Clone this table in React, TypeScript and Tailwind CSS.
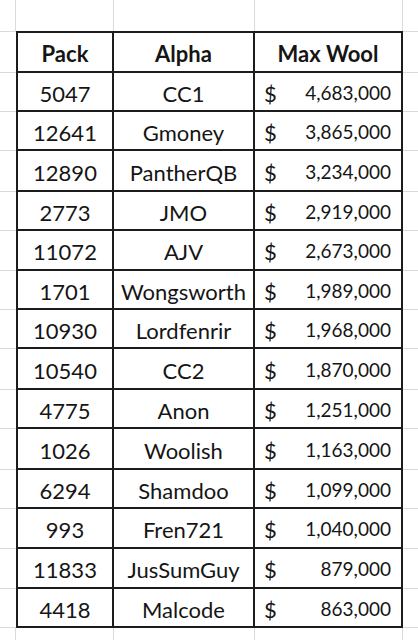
import React from "react";

const rows: [string, string, string][] = [
  ["5047", "CC1", "4,683,000"],
  ["12641", "Gmoney", "3,865,000"],
  ["12890", "PantherQB", "3,234,000"],
  ["2773", "JMO", "2,919,000"],
  ["11072", "AJV", "2,673,000"],
  ["1701", "Wongsworth", "1,989,000"],
  ["10930", "Lordfenrir", "1,968,000"],
  ["10540", "CC2", "1,870,000"],
  ["4775", "Anon", "1,251,000"],
  ["1026", "Woolish", "1,163,000"],
  ["6294", "Shamdoo", "1,099,000"],
  ["993", "Fren721", "1,040,000"],
  ["11833", "JusSumGuy", "879,000"],
  ["4418", "Malcode", "863,000"],
];

const heights = [39, 39, 41, 39, 40, 39, 39, 41, 39, 41, 39, 40, 40, 39];

const font = { fontFamily: "Lato, 'Open Sans', sans-serif" };

function Strip({ h }: { h: number }) {
  return (
    <div className="flex" style={{ height: h }}>
      <div className="w-[16px] border-r border-[#dadada]" />
      <div className="w-[98px] border-r border-[#dadada]" />
      <div className="w-[141px] border-r border-[#dadada]" />
      <div className="w-[148px] border-r border-[#dadada]" />
      <div className="w-[15px]" />
    </div>
  );
}

export default function App() {
  return (
    <div className="w-[418px] h-[640px] bg-white overflow-hidden text-[22px] text-[#151515]" style={font}>
      <Strip h={31} />
      {/* header */}
      <div className="flex h-[42px]">
        <div className="w-[16px] border-t border-b border-[#dadada]" />
        <div className="w-[98px] border-2 border-[#1c1c1c] flex items-center justify-center font-bold pt-[2px]">Pack</div>
        <div className="w-[141px] border-y-2 border-r-2 border-[#1c1c1c] flex items-center justify-center font-bold pt-[2px]">Alpha</div>
        <div className="w-[148px] border-y-2 border-r-2 border-[#1c1c1c] flex items-center justify-center font-bold pt-[2px]">Max Wool</div>
        <div className="w-[15px] border-t border-b border-[#dadada]" />
      </div>
      {rows.map((r, i) => (
        <div key={i} className="flex" style={{ height: heights[i] }}>
          <div className="w-[16px] border-b border-[#dadada]" />
          <div className="w-[98px] border-x-2 border-b-2 border-[#1c1c1c] flex items-center justify-center pt-[3px]">{r[0]}</div>
          <div className="w-[141px] border-r-2 border-b-2 border-[#1c1c1c] flex items-center justify-center pt-[3px]">{r[1]}</div>
          <div className="w-[148px] border-r-2 border-b-2 border-[#1c1c1c] flex items-center justify-between pl-[9px] pr-[10px] pt-[3px]">
            <span>$</span>
            <span className="text-[19px]">{r[2]}</span>
          </div>
          <div className="w-[15px] border-b border-[#dadada]" />
        </div>
      ))}
      <Strip h={12} />
    </div>
  );
}
